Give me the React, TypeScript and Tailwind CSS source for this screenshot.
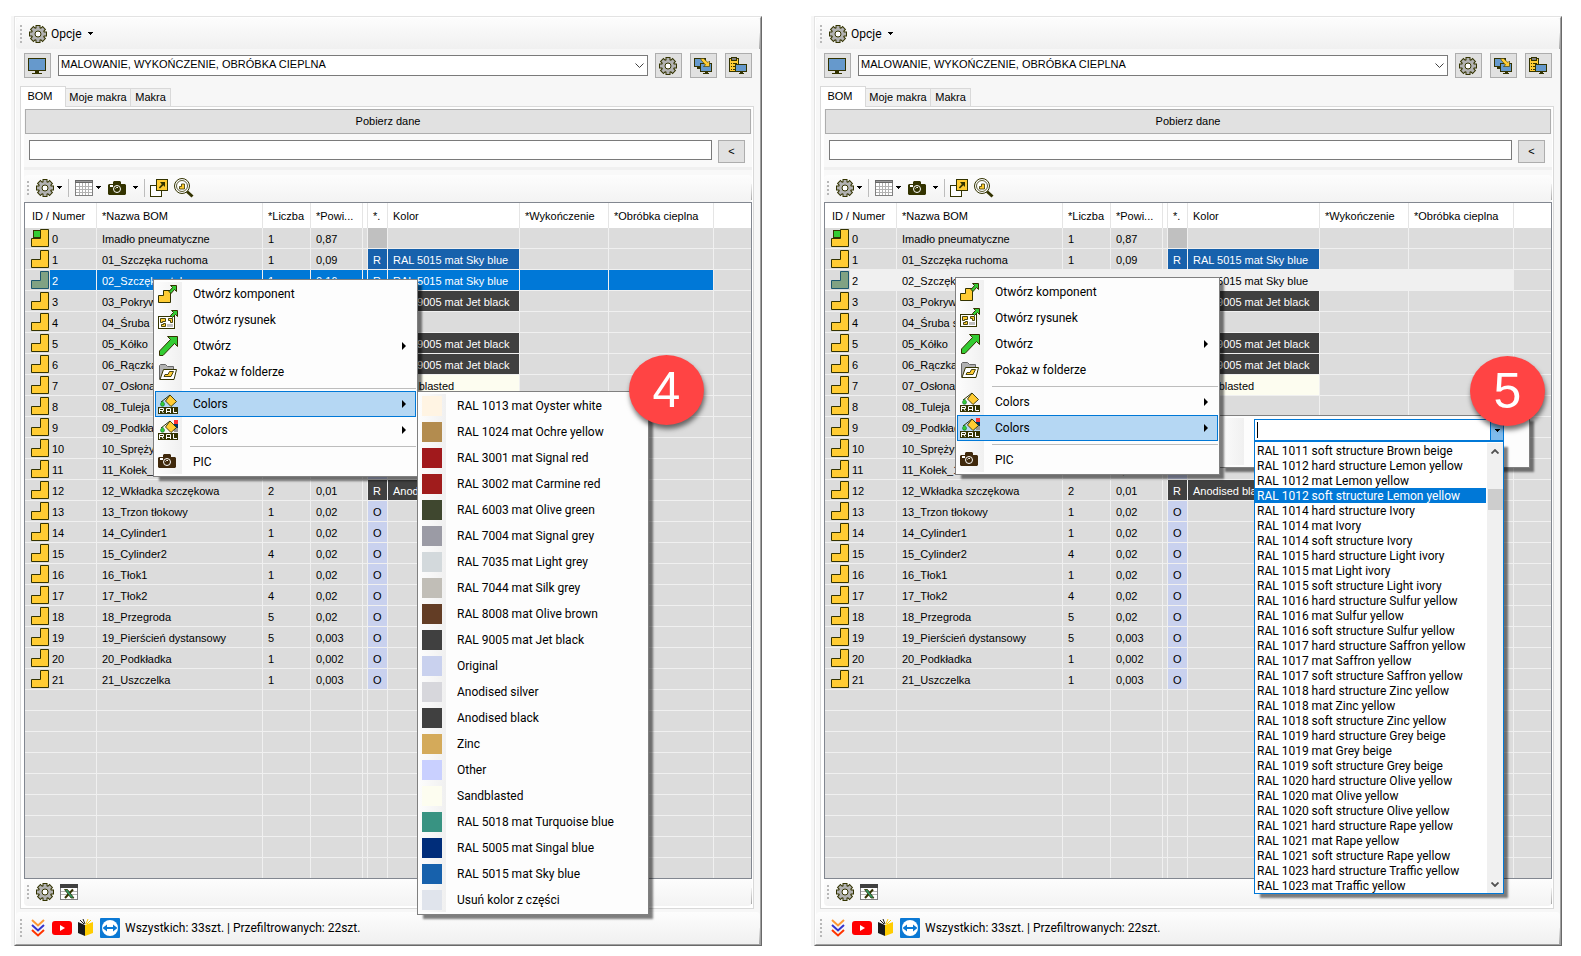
import type { ReactNode } from "react";
import clsx from "clsx";

type Row = {
  name: string;
  qty: string;
  mass: string;
  mark?: string;
  color?: string;
  tone?: string;
};

const BLUE = "bg-[#1761ac] text-white";
const DARK = "bg-[#404040] text-white";
const IVORY = "bg-[#fdfdf0]";
const ORIGINAL = "bg-[#c9d1ee]";

const ROWS: Row[] = [
  { name: "Imadło pneumatyczne", qty: "1", mass: "0,87", tone: "bg-[#c0c0c0]" },
  { name: "01_Szczęka ruchoma", qty: "1", mass: "0,09", mark: "R", color: "RAL 5015 mat Sky blue", tone: BLUE },
  { name: "02_Szczęka stała", qty: "1", mass: "0,16", mark: "R", color: "RAL 5015 mat Sky blue", tone: BLUE },
  { name: "03_Pokrywa", qty: "1", mass: "0,05", mark: "R", color: "RAL 9005 mat Jet black", tone: DARK },
  { name: "04_Śruba specjalna", qty: "1", mass: "0,02", mark: "O", tone: ORIGINAL },
  { name: "05_Kółko", qty: "1", mass: "0,02", mark: "R", color: "RAL 9005 mat Jet black", tone: DARK },
  { name: "06_Rączka", qty: "1", mass: "0,02", mark: "R", color: "RAL 9005 mat Jet black", tone: DARK },
  { name: "07_Osłona", qty: "1", mass: "0,02", mark: "S", color: "Sandblasted", tone: IVORY },
  { name: "08_Tuleja", qty: "1", mass: "0,02", mark: "O", tone: ORIGINAL },
  { name: "09_Podkładka", qty: "1", mass: "0,02", mark: "O", tone: ORIGINAL },
  { name: "10_Sprężyna", qty: "1", mass: "0,02", mark: "O", tone: ORIGINAL },
  { name: "11_Kołek_1", qty: "1", mass: "0,02", mark: "O", tone: ORIGINAL },
  { name: "12_Wkładka szczękowa", qty: "2", mass: "0,01", mark: "R", color: "Anodised black", tone: DARK },
  { name: "13_Trzon tłokowy", qty: "1", mass: "0,02", mark: "O", tone: ORIGINAL },
  { name: "14_Cylinder1", qty: "1", mass: "0,02", mark: "O", tone: ORIGINAL },
  { name: "15_Cylinder2", qty: "4", mass: "0,02", mark: "O", tone: ORIGINAL },
  { name: "16_Tłok1", qty: "1", mass: "0,02", mark: "O", tone: ORIGINAL },
  { name: "17_Tłok2", qty: "4", mass: "0,02", mark: "O", tone: ORIGINAL },
  { name: "18_Przegroda", qty: "5", mass: "0,02", mark: "O", tone: ORIGINAL },
  { name: "19_Pierścień dystansowy", qty: "5", mass: "0,003", mark: "O", tone: ORIGINAL },
  { name: "20_Podkładka", qty: "1", mass: "0,002", mark: "O", tone: ORIGINAL },
  { name: "21_Uszczelka", qty: "1", mass: "0,003", mark: "O", tone: ORIGINAL },
];

const EMPTY_ROWS = [22, 23, 24, 25, 26, 27, 28, 29, 30];
const SELECTED = 2;

const SWATCHES = [
  { label: "RAL 1013 mat Oyster white", tone: "bg-[#fff4e3]" },
  { label: "RAL 1024 mat Ochre yellow", tone: "bg-[#b38c4f]" },
  { label: "RAL 3001 mat Signal red", tone: "bg-[#a1191c]" },
  { label: "RAL 3002 mat Carmine red", tone: "bg-[#a01c1c]" },
  { label: "RAL 6003 mat Olive green", tone: "bg-[#3f472f]" },
  { label: "RAL 7004 mat Signal grey", tone: "bg-[#9b9ba5]" },
  { label: "RAL 7035 mat Light grey", tone: "bg-[#d3d9dc]" },
  { label: "RAL 7044 mat Silk grey", tone: "bg-[#c1beb7]" },
  { label: "RAL 8008 mat Olive brown", tone: "bg-[#633d25]" },
  { label: "RAL 9005 mat Jet black", tone: "bg-[#404040]" },
  { label: "Original", tone: "bg-[#c9d1ee]" },
  { label: "Anodised silver", tone: "bg-[#d7d7dc]" },
  { label: "Anodised black", tone: "bg-[#404040]" },
  { label: "Zinc", tone: "bg-[#d4aa5a]" },
  { label: "Other", tone: "bg-[#c9d0ff]" },
  { label: "Sandblasted", tone: "bg-[#fdfdf0]" },
  { label: "RAL 5018 mat Turquoise blue", tone: "bg-[#389382]" },
  { label: "RAL 5005 mat Singal blue", tone: "bg-[#002d7a]" },
  { label: "RAL 5015 mat Sky blue", tone: "bg-[#1761ac]" },
  { label: "Usuń kolor z części", tone: "bg-[#e0e4ec]" },
];

const RAL_OPTIONS = [
  "RAL 1011 soft structure Brown beige",
  "RAL 1012 hard structure Lemon yellow",
  "RAL 1012 mat Lemon yellow",
  "RAL 1012 soft structure Lemon yellow",
  "RAL 1014 hard structure Ivory",
  "RAL 1014 mat Ivory",
  "RAL 1014 soft structure Ivory",
  "RAL 1015 hard structure Light ivory",
  "RAL 1015 mat Light ivory",
  "RAL 1015 soft structure Light ivory",
  "RAL 1016 hard structure Sulfur yellow",
  "RAL 1016 mat Sulfur yellow",
  "RAL 1016 soft structure Sulfur yellow",
  "RAL 1017 hard structure Saffron yellow",
  "RAL 1017 mat Saffron yellow",
  "RAL 1017 soft structure Saffron yellow",
  "RAL 1018 hard structure Zinc yellow",
  "RAL 1018 mat Zinc yellow",
  "RAL 1018 soft structure Zinc yellow",
  "RAL 1019 hard structure Grey beige",
  "RAL 1019 mat Grey beige",
  "RAL 1019 soft structure Grey beige",
  "RAL 1020 hard structure Olive yellow",
  "RAL 1020 mat Olive yellow",
  "RAL 1020 soft structure Olive yellow",
  "RAL 1021 hard structure Rape yellow",
  "RAL 1021 mat Rape yellow",
  "RAL 1021 soft structure Rape yellow",
  "RAL 1023 hard structure Traffic yellow",
  "RAL 1023 mat Traffic yellow",
];

const INK = "#333300";
const GOLD = "#ffcc33";

function Icon({ size = 18, children }: { size?: 18 | 20; children: ReactNode }) {
  return (
    <svg
      viewBox={size === 20 ? "0 0 20 20" : "0 0 18 18"}
      className={clsx("shrink-0", size === 20 ? "size-5" : "size-[18px]")}
      fill="none"
      aria-hidden="true"
    >
      {children}
    </svg>
  );
}

function GearIcon() {
  return (
    <Icon>
      <g fill={INK}>
        <rect x="6.5" width="5" height="18" />
        <rect y="6.5" width="18" height="5" />
        <rect x="6.5" width="5" height="18" transform="rotate(45 9 9)" />
        <rect x="6.5" width="5" height="18" transform="rotate(-45 9 9)" />
        <circle cx="9" cy="9" r="7" />
      </g>
      <g fill="#b2b2b2">
        <rect x="7.5" y="1" width="3" height="16" />
        <rect x="1" y="7.5" width="16" height="3" />
        <rect x="7.5" y="1" width="3" height="16" transform="rotate(45 9 9)" />
        <rect x="7.5" y="1" width="3" height="16" transform="rotate(-45 9 9)" />
        <circle cx="9" cy="9" r="6" />
      </g>
      <circle cx="9" cy="9" r="3" fill="#fff" stroke={INK} />
    </Icon>
  );
}

function PartIcon({ root, selected }: { root?: boolean; selected?: boolean }) {
  return (
    <Icon>
      <path
        d="M.5 9.5H9.5V.5H17.5V17.5H.5Z"
        fill={selected ? "#80a283" : GOLD}
        stroke={selected ? "#1a566f" : INK}
      />
      {root && <rect x="2.5" y="1.5" width="7" height="7" fill="#33cc33" stroke={INK} />}
    </Icon>
  );
}

function MonitorIcon() {
  return (
    <Icon>
      <rect x=".5" y="1.5" width="17" height="12" fill="#6699cc" stroke={INK} />
      <path d="M7 14h4v2h3v1H4v-1h3z" fill={INK} />
    </Icon>
  );
}

function MonitorSwapIcon() {
  return (
    <Icon>
      <rect x=".5" y="1.5" width="11" height="8" fill="#6699cc" stroke={INK} />
      <path d="M3 10h3v2H3z" fill={INK} />
      <rect x="6.5" y="6.5" width="11" height="8" fill="#6699cc" stroke={INK} />
      <path d="M11 15h3v1h1v1H9v-1h2z" fill={INK} />
      <path d="M6.5 1.5h3l4.5 4 1.5-1.5v5.500h-6l2-1.500-4-4.500z" fill={GOLD} stroke={INK} strokeWidth=".6" />
    </Icon>
  );
}

function ClipboardIcon() {
  return (
    <Icon>
      <rect x=".5" y="1.5" width="9" height="13" fill={GOLD} stroke={INK} />
      <rect x="2.5" y=".5" width="5" height="3" fill="#808080" stroke={INK} />
      <path d="M2 6.5h1M4 6.5h4M2 9.5h1M4 9.5h3M2 12.5h1M4 12.5h3" stroke={INK} />
      <rect x="6.5" y="7.5" width="11" height="7" fill="#6699cc" stroke={INK} />
      <path d="M11 15h3v1h1v1h-5v-1h1z" fill={INK} />
    </Icon>
  );
}

function GridIcon() {
  return (
    <Icon>
      <rect x=".5" y="1.5" width="17" height="15" fill="#fff" stroke="#808080" />
      <path d="M0 1h18v3H0z" fill="#666" />
      <path d="M1 2h16v1H1z" fill="#999" />
      <path d="M1 7.5h16M1 10.5h16M1 13.5h16M4.5 4v12M7.5 4v12M10.5 4v12M13.5 4v12" stroke="#b2b2b2" />
    </Icon>
  );
}

function CameraIcon({ size = 18, ink = INK }: { size?: 18 | 20; ink?: string }) {
  return (
    <Icon size={size}>
      <path d="M1 5h4V3l1-1h6l1 1v2h4l1 1v9l-1 1H1l-1-1V6z" fill={ink} />
      <circle cx="9" cy="10" r="3.5" stroke="#fff" />
      <path d="M2 6h3v2H2z" fill="#fff" />
      <path d="M7.5 9.5l1-1H10" stroke="#fff" />
    </Icon>
  );
}

function PopOutIcon() {
  return (
    <Icon>
      <rect x=".5" y="6.5" width="11" height="11" fill="#fff" stroke={INK} />
      <rect x="6.5" y=".5" width="11" height="11" fill={GOLD} stroke={INK} />
      <path d="M10 3h5v5l-1.700-1.700L10 9.600 8.800 8.400l3-3.200z" fill={INK} />
    </Icon>
  );
}

function InspectIcon() {
  return (
    <Icon size={20}>
      <circle cx="8" cy="8" r="7.5" fill="#fff" stroke={INK} />
      <circle cx="8" cy="8" r="5.5" stroke={INK} strokeWidth=".8" />
      <path d="M5.5 8.5h2V6h3v5h-5z" fill={GOLD} stroke={INK} strokeWidth=".8" />
      <path d="M13 13.500l5.500 5" stroke={INK} strokeWidth="3" />
    </Icon>
  );
}

function ExcelIcon() {
  return (
    <Icon>
      <rect x=".5" y="1.5" width="17" height="15" fill="#fff" stroke="#808080" />
      <path d="M0 1h18v4H0z" fill="#404040" />
      <path d="M1 8.5h16M1 11.5h16" stroke="#b2b2b2" />
      <path d="M13 6.5L5 15" stroke={INK} strokeWidth="2" />
      <path d="M4.5 6.5h3l6.500 8.500h-3z" fill="#339966" stroke={INK} strokeWidth=".8" />
    </Icon>
  );
}

function OpenPartIcon() {
  return (
    <Icon size={20}>
      <path d="M.5 11.5H5.5V6.5H12.5V18.5H.5Z" fill={GOLD} stroke={INK} />
      <path d="M12.5 1.5h6v6l-2-2-3.500 4-2-2 3.500-4z" fill="#33cc33" stroke={INK} />
    </Icon>
  );
}

function OpenDrawingIcon() {
  return (
    <Icon size={20}>
      <rect x=".5" y="6.5" width="16" height="12" fill="#fff" stroke={INK} />
      <path
        d="M2.5 8.5h5v3h-3v1h-2zM10.5 8.5h4v4h-2v-2h-2zM3.5 16.5v-2h2v-1h2v3z"
        fill={GOLD}
        stroke={INK}
        strokeWidth=".9"
      />
      <path d="M9 14h6v3H9z" fill="#c0c0c0" />
      <path d="M13.5.5h6v6l-2-2-3 3-2-2 3-3z" fill="#33cc33" stroke={INK} />
    </Icon>
  );
}

function OpenIcon() {
  return (
    <Icon size={20}>
      <path d="M9.5.5h10v10l-3-3L5 19.5H1.5V15L12.5 3.5z" fill="#33cc33" stroke={INK} />
    </Icon>
  );
}

function FolderIcon() {
  return (
    <Icon size={20}>
      <path d="M1.5 17.5V3.5l1-1h5l2 2h6v3" fill="#b2b2b2" stroke="#666" />
      <path d="M2 17.5l3.500-10h13l-2.500 10z" fill="#fff" stroke={INK} />
      <path d="M6 14.5l1-2h3l1.500-3h4l-2.500 5z" fill={GOLD} stroke={INK} strokeWidth=".9" />
    </Icon>
  );
}

function RalIcon({ palette }: { palette?: boolean }) {
  return (
    <Icon size={20}>
      {palette && (
        <>
          <path d="M16 0h4v4h-4z" fill="#f33" />
          <path d="M16 4h4v4h-4z" fill="#003366" />
          <path d="M16 8h4v4h-4z" fill="#999" />
        </>
      )}
      <path d="M12 1l6.500 6.500-5.500 5-5.500-5.500z" fill={GOLD} stroke={INK} strokeWidth=".9" />
      <path d="M12 1L3 8" stroke={INK} />
      <path
        d="M4.5 7c1 1.500 2 2 2 3.300a2 2 0 0 1-4 0c0-1.300 1-1.800 2-3.300z"
        fill="#33cc33"
        stroke="#063"
        strokeWidth=".6"
      />
      <path d="M0 13h20v7H0z" fill={INK} />
      <path d="M1.5 19v-4.500h4v2h-4M4 17l1.500 2M8.500 19v-4.500h4V19M8.500 17.500h4M15.500 14v4.500H19" stroke="#fff" />
    </Icon>
  );
}

function Grip({ dots = 5 }: { dots?: 4 | 5 }) {
  return (
    <div className="flex w-0.5 flex-col gap-0.5">
      {[1, 2, 3, 4, 5].slice(0, dots).map((dot) => (
        <span key={dot} className="size-0.5 bg-[#b8b8b8]" />
      ))}
    </div>
  );
}

function Caret() {
  return (
    <svg viewBox="0 0 5 3" className="h-[3px] w-[5px] shrink-0" aria-hidden="true">
      <path d="M0 0h5v1H4v1H3v1H2V2H1V1H0z" fill="#000" />
    </svg>
  );
}

function BarEnd() {
  return <span className="ml-auto h-4 w-px self-end bg-linear-to-b from-[#f0f0f0] to-[#a8a8a8]" />;
}

function SquareButton({ label, children }: { label: string; children: ReactNode }) {
  return (
    <button
      type="button"
      aria-label={label}
      className="flex h-[25px] w-[27px] shrink-0 items-center justify-start border border-[#adadad] bg-[#e1e1e1] pl-[3px]"
    >
      {children}
    </button>
  );
}

function BomTable({ focused }: { focused: boolean }) {
  const cell =
    "h-[21px] overflow-hidden whitespace-nowrap border-r border-b border-[#f0f0f0] p-0 pt-0.5 pl-[5px] leading-4";
  const head =
    "h-[25px] overflow-hidden whitespace-nowrap border-r border-[#e5e5e5] bg-white p-0 pt-0.5 pl-[5px] text-left font-normal";
  const picked = focused ? "bg-[#0078d7] text-white" : "bg-[#f0f0f0]";

  return (
    <div className="border border-[#828790] bg-[#dcdcdc]">
      <table className="w-full table-fixed border-separate border-spacing-0 text-[11px] text-black">
        <colgroup>
          <col className="w-[72px]" />
          <col className="w-[166px]" />
          <col className="w-[48px]" />
          <col className="w-[52px]" />
          <col className="w-[5px]" />
          <col className="w-[20px]" />
          <col className="w-[132px]" />
          <col className="w-[89px]" />
          <col className="w-[105px]" />
          <col />
        </colgroup>
        <thead>
          <tr>
            <th className={clsx(head, "pl-[7px]")}>ID / Numer</th>
            <th className={head}>*Nazwa BOM</th>
            <th className={head}>*Liczba</th>
            <th className={head}>*Powi...</th>
            <th className="border-r border-[#e5e5e5] bg-white p-0" />
            <th className={head}>*.</th>
            <th className={head}>Kolor</th>
            <th className={head}>*Wykończenie</th>
            <th className={head}>*Obróbka cieplna</th>
            <th className="bg-white p-0" />
          </tr>
        </thead>
        <tbody>
          {ROWS.map((row, index) => {
            const selected = index === SELECTED;
            const fill = selected && picked;
            const tone = selected ? picked : row.tone;
            return (
              <tr key={row.name}>
                <td className="h-[21px] border-r border-b border-[#f0f0f0] p-0 pl-[6px] leading-4">
                  <div className="flex h-5 items-center">
                    <PartIcon root={index === 0} selected={selected} />
                    <span className={clsx("ml-px flex h-5 flex-1 items-center pt-0.5 pl-0.5", fill)}>{index}</span>
                  </div>
                </td>
                <td className={clsx(cell, fill)}>{row.name}</td>
                <td className={clsx(cell, fill)}>{row.qty}</td>
                <td className={clsx(cell, fill)}>{row.mass}</td>
                <td className={clsx("border-r border-b border-[#f0f0f0] p-0", fill)} />
                <td className={clsx(cell, tone)}>{row.mark}</td>
                <td className={clsx(cell, row.color ? tone : fill)}>{row.color}</td>
                <td className={clsx(cell, fill)} />
                <td className={clsx(cell, fill)} />
                <td className="border-b border-[#f0f0f0] p-0" />
              </tr>
            );
          })}
          {EMPTY_ROWS.map((row) => (
            <tr key={row} className="last:*:h-[20px] last:*:border-b-0">
              {[0, 1, 2, 3, 4, 5, 6, 7, 8].map((col) => (
                <td key={col} className="h-[21px] border-r border-b border-[#f0f0f0] p-0" />
              ))}
              <td className="h-[21px] border-b border-[#f0f0f0] p-0" />
            </tr>
          ))}
        </tbody>
      </table>
    </div>
  );
}

function StatusBar() {
  return (
    <footer className="flex h-8 items-center rounded-sm bg-linear-to-b from-[#fdfdfd] to-[#f0f0f0] pl-1 text-[12px]">
      <Grip />
      <div className="ml-[9px] flex items-center">
        <Icon>
          <path d="M1 1l6 5.500L13 1" stroke="#f93" strokeWidth="2" />
          <path d="M1 6l6 5.500L13 6" stroke="#33c" strokeWidth="2" />
          <path d="M1 11l6 5.500L13 11" stroke="#f30" strokeWidth="2" />
        </Icon>
      </div>
      <svg viewBox="0 0 20 14" className="ml-[3px] h-3.5 w-5 shrink-0" aria-hidden="true">
        <rect width="20" height="14" rx="3" fill="#f00" />
        <path d="M8 4l5 3-5 3z" fill="#fff" />
      </svg>
      <div className="ml-[5px]">
        <Icon>
          <path d="M1 3l7 3v11l-7-3z" fill="#1a1a1a" />
          <path d="M8 6l8-3v11l-8 3z" fill="#ffcc00" />
          <path d="M3 1l4 4M6 0l2 5" stroke="#1a1a1a" />
          <path d="M9 5l2-5M10 5l4-4" stroke="#ffcc00" />
        </Icon>
      </div>
      <div className="ml-[5px]">
        <Icon size={20}>
          <rect width="20" height="20" rx="1" fill="#0a78d4" />
          <circle cx="10" cy="10" r="8" fill="#fff" />
          <path d="M2.5 10L7 6.5V9h6V6.5l4.500 3.500-4.500 3.500V11H7v2.500z" fill="#0a78d4" />
        </Icon>
      </div>
      <span className="ml-[5px]">Wszystkich: 33szt. | Przefiltrowanych: 22szt.</span>
      <BarEnd />
    </footer>
  );
}

function AppWindow({ focused, children }: { focused: boolean; children: ReactNode }) {
  const ui = "font-['Liberation_Sans',sans-serif] text-[11px]";

  return (
    <section className="relative min-w-0 flex-1 bg-[#f7f7f7] pl-[3px] text-black">
      <div className="border border-t-[#e3e3e3] border-r-[#696969] border-b-[#696969] border-l-[#e3e3e3]">
        <div className="border border-t-white border-r-[#a0a0a0] border-b-[#a0a0a0] border-l-white">
          <div className="flex h-[31px] items-center rounded-sm bg-linear-to-b from-[#fdfdfd] to-[#f0f0f0] pl-1 text-[12px]">
            <Grip />
            <button type="button" className="ml-[7px] flex items-center gap-1">
              <GearIcon />
              <span>Opcje</span>
              <span className="ml-0.5">
                <Caret />
              </span>
            </button>
            <BarEnd />
          </div>

          <div className={clsx("flex items-center px-2 pt-1 pb-2", ui)}>
            <SquareButton label="Monitor">
              <MonitorIcon />
            </SquareButton>
            <div className="relative mx-[7px] min-w-0 flex-1">
              <select
                aria-label="Widok"
                className="block h-[21px] w-full appearance-none border border-[#7a7a7a] bg-white pr-5 pb-0.5 pl-0.5 leading-[17px]"
              >
                <option>MALOWANIE, WYKOŃCZENIE, OBRÓBKA CIEPLNA</option>
              </select>
              <svg viewBox="0 0 9 6" className="absolute top-2 right-1 h-1.5 w-[9px]" fill="none" aria-hidden="true">
                <path d="M.5.5l4 4 4-4" stroke="#404040" />
              </svg>
            </div>
            <div className="flex gap-2">
              <SquareButton label="Ustawienia">
                <GearIcon />
              </SquareButton>
              <SquareButton label="Przenieś widok">
                <MonitorSwapIcon />
              </SquareButton>
              <SquareButton label="Wklej widok">
                <ClipboardIcon />
              </SquareButton>
            </div>
          </div>

          <div className={clsx("relative z-10 -mb-px flex items-end pl-1", ui)} role="tablist">
            <button
              type="button"
              role="tab"
              aria-selected="true"
              className="h-[21px] w-[46px] border border-b-0 border-[#d9d9d9] bg-white pr-1.5 pb-0.5"
            >
              BOM
            </button>
            <button
              type="button"
              role="tab"
              className="h-[19px] w-[65px] border border-l-0 border-[#d9d9d9] bg-[#f0f0f0]"
            >
              Moje makra
            </button>
            <button
              type="button"
              role="tab"
              className="h-[19px] w-[40px] border border-l-0 border-[#d9d9d9] bg-[#f0f0f0]"
            >
              Makra
            </button>
          </div>

          <div className={clsx("mr-1.5 ml-1 border border-[#d9d9d9] bg-white pt-0.5 pr-px pb-0.5 pl-[3px]", ui)}>
            <div className="bg-[#f9f9f9]">
              <div className="px-px">
                <button type="button" className="block h-[25px] w-full border border-[#adadad] bg-[#e1e1e1]">
                  Pobierz dane
                </button>
              </div>
              <div className="flex items-start gap-1.5 border-b-3 border-[#f0f0f0] pt-1.5 pr-[7px] pb-1 pl-[5px]">
                <input
                  type="text"
                  aria-label="Filtr"
                  className="h-5 min-w-0 flex-1 border border-[#7a7a7a] bg-white px-1 outline-none"
                />
                <button type="button" aria-label="Zwiń" className="h-[23px] w-[27px] border border-[#adadad] bg-[#e1e1e1]">
                  &lt;
                </button>
              </div>
              <div className="mt-[5px] flex h-[27px] items-center rounded-sm bg-linear-to-b from-[#fdfdfd] to-[#f3f3f3] pb-0.5 pl-[3px]">
                <Grip dots={4} />
                <button type="button" aria-label="Opcje listy" className="ml-[7px] flex items-center gap-[3px]">
                  <GearIcon />
                  <Caret />
                </button>
                <span className="mx-[6px] h-[18px] w-px bg-[#bdbdbd]" />
                <button type="button" aria-label="Kolumny" className="flex items-center gap-[3px]">
                  <GridIcon />
                  <Caret />
                </button>
                <button type="button" aria-label="Zdjęcie" className="ml-[7px] flex items-center gap-[7px]">
                  <CameraIcon />
                  <Caret />
                </button>
                <span className="mr-[5px] ml-[6px] h-[18px] w-px bg-[#bdbdbd]" />
                <button type="button" aria-label="Otwórz w oknie">
                  <PopOutIcon />
                </button>
                <button type="button" aria-label="Szukaj" className="ml-[6px]">
                  <InspectIcon />
                </button>
                <BarEnd />
              </div>
            </div>

            <BomTable focused={focused} />

            <div className="flex h-[27px] items-center rounded-sm bg-linear-to-b from-[#fdfdfd] to-[#f3f3f3] pb-0.5 pl-[3px]">
              <Grip dots={4} />
              <button type="button" aria-label="Ustawienia eksportu" className="ml-[7px]">
                <GearIcon />
              </button>
              <button type="button" aria-label="Eksport do Excela" className="ml-[6px]">
                <ExcelIcon />
              </button>
              <BarEnd />
            </div>
          </div>

          <div className="h-[3px]" />
          <StatusBar />
        </div>
      </div>
      {children}
    </section>
  );
}

function MenuItem({
  icon,
  label,
  submenu,
  active,
}: {
  icon: ReactNode;
  label: string;
  submenu?: boolean;
  active?: boolean;
}) {
  return (
    <button
      type="button"
      role="menuitem"
      className={clsx(
        "flex h-[26px] w-full items-center border pr-[9px] pl-0.5 text-left",
        active ? "border-[#0078d7] bg-[#b5d7f3]" : "border-transparent",
      )}
    >
      {icon}
      <span className="ml-[15px] flex-1">{label}</span>
      {submenu && (
        <svg viewBox="0 0 4 8" className="h-2 w-1" aria-hidden="true">
          <path d="M0 0l4 4-4 4z" fill="#000" />
        </svg>
      )}
    </button>
  );
}

const MENU_BOX = "border border-[#808080] bg-[#fdfdfd] shadow-[5px_5px_2px_-1px_rgba(0,0,0,0.5)]";
const GUTTER = "bg-linear-to-r from-[#fcfcfc] to-[#f0f0f0]";

function ContextMenu({ active, className }: { active: 1 | 2; className: string }) {
  return (
    <div role="menu" className={clsx("absolute z-30 w-[265px] p-px text-[12px]", MENU_BOX, className)}>
      <div className={clsx("absolute inset-y-0.5 left-0.5 w-[26px]", GUTTER)} />
      <div className="relative">
        <MenuItem icon={<OpenPartIcon />} label="Otwórz komponent" />
        <MenuItem icon={<OpenDrawingIcon />} label="Otwórz rysunek" />
        <MenuItem icon={<OpenIcon />} label="Otwórz" submenu />
        <MenuItem icon={<FolderIcon />} label="Pokaż w folderze" />
        <hr className="mt-[3px] mb-0.5 ml-[35px] border-[#bdbdbd]" />
        <MenuItem icon={<RalIcon />} label="Colors" submenu active={active === 1} />
        <MenuItem icon={<RalIcon palette />} label="Colors" submenu active={active === 2} />
        <hr className="mt-[3px] mb-0.5 ml-[35px] border-[#bdbdbd]" />
        <MenuItem icon={<CameraIcon size={20} ink="#40290c" />} label="PIC" />
      </div>
    </div>
  );
}

function SwatchMenu() {
  return (
    <div role="menu" className={clsx("absolute top-[375px] left-[406px] z-30 w-[232px] p-px text-[12px]", MENU_BOX)}>
      <div className={clsx("absolute inset-y-0.5 left-0.5 w-[26px]", GUTTER)} />
      <div className="relative">
        {SWATCHES.map((swatch) => (
          <button
            key={swatch.label}
            type="button"
            role="menuitem"
            className="flex h-[26px] w-full items-center pl-[3px] text-left"
          >
            <span className={clsx("size-5 shrink-0", swatch.tone)} />
            <span className="ml-[15px]">{swatch.label}</span>
          </button>
        ))}
      </div>
    </div>
  );
}

function RalPicker() {
  return (
    <div className={clsx("absolute top-[399px] left-[408px] z-20 h-[53px] w-[311px] text-[12px]", MENU_BOX)}>
      <div className={clsx("absolute inset-y-0.5 left-0 w-6", GUTTER)} />
      <div className="absolute top-[3px] left-[34px] w-[250px]">
        <div className="relative flex h-[22px] border border-[#0078d7] bg-white">
          <input
            type="text"
            role="combobox"
            aria-label="Kolor RAL"
            aria-expanded="true"
            aria-controls="ral-options"
            className="min-w-0 flex-1 bg-white pl-0.5 outline-none"
          />
          <span className="absolute top-0.5 left-0.5 h-4 w-px bg-black" />
          <button
            type="button"
            aria-label="Rozwiń"
            className="flex w-[13px] items-center justify-center border-l border-[#0078d7] bg-[#7fbbec]"
          >
            <Caret />
          </button>
        </div>
        <div className="flex border border-[#0078d7] bg-white pt-px shadow-[5px_5px_2px_-1px_rgba(0,0,0,0.5)]">
          <ul id="ral-options" role="listbox" aria-label="Kolory RAL" className="flex-1 pr-px">
            {RAL_OPTIONS.map((option, index) => (
              <li
                key={option}
                role="option"
                aria-selected={index === 3}
                className={clsx("h-[15px] pl-0.5 leading-[17px] whitespace-nowrap", index === 3 && "bg-[#0078d7] text-white")}
              >
                {option}
              </li>
            ))}
          </ul>
          <div className="flex w-4 flex-col items-center justify-between bg-[#f0f0f0] py-1.5">
            <svg viewBox="0 0 8 5" className="h-[5px] w-2" fill="none" aria-hidden="true">
              <path d="M.5 4.5L4 1l3.500 3.500" stroke="#505050" strokeWidth="1.8" />
            </svg>
            <div className="mt-[35px] mb-auto h-[21px] w-[15px] bg-[#cdcdcd]" />
            <svg viewBox="0 0 8 5" className="h-[5px] w-2" fill="none" aria-hidden="true">
              <path d="M.5.5L4 4 7.5.5" stroke="#505050" strokeWidth="1.8" />
            </svg>
          </div>
        </div>
      </div>
    </div>
  );
}

function StepBadge({ step, className }: { step: number; className: string }) {
  return (
    <div
      className={clsx(
        "absolute z-40 flex h-[70px] w-[75px] items-center justify-center rounded-[50%] bg-[#ff4444] font-['Liberation_Sans',sans-serif] text-[50px] leading-none text-white shadow-[1px_4px_5px_rgba(0,0,0,0.55)]",
        className,
      )}
    >
      {step}
    </div>
  );
}

export default function App() {
  return (
    <main className="flex min-h-screen items-start gap-[49px] bg-white pt-4 pr-[19px] pl-[11px] font-[Roboto,sans-serif]">
      <AppWindow focused>
        <ContextMenu active={1} className="top-[263px] left-[142px]" />
        <SwatchMenu />
        <StepBadge step={4} className="top-[339px] left-[618px]" />
      </AppWindow>
      <AppWindow focused={false}>
        <RalPicker />
        <ContextMenu active={2} className="top-[261px] left-[144px]" />
        <StepBadge step={5} className="top-[340px] left-[659px]" />
      </AppWindow>
    </main>
  );
}
